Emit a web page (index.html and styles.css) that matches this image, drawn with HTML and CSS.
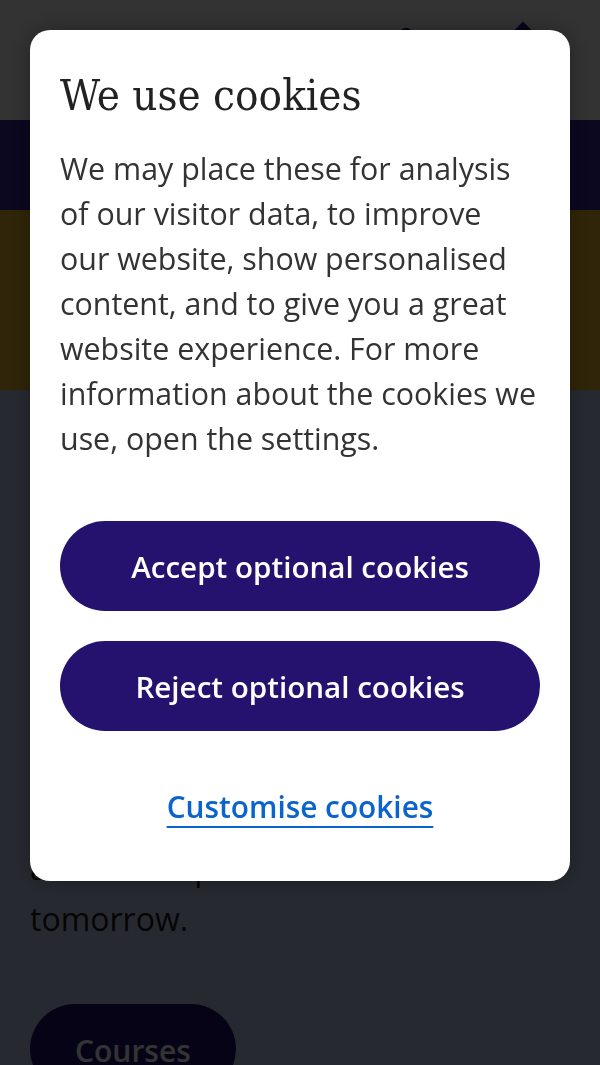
FILE: index.html
```html
<!DOCTYPE html>
<html lang="en">
<head>
  <meta charset="UTF-8">
  <title>Learn with us</title>
  <link rel="stylesheet" href="styles.css">
</head>
<body>

<div class="page">
  <header class="site-header">
    <div class="logo">LOGO</div>
    <div class="header-icons">
      <svg class="icon" viewBox="0 0 24 24" width="34" height="34">
        <circle cx="12" cy="7" r="5" fill="#25126e"/>
        <path d="M3 22c0-5 4-8 9-8s9 3 9 8z" fill="#25126e"/>
      </svg>
      <svg class="icon" viewBox="0 0 24 24" width="36" height="36">
        <path d="M12 1 1 12h3v10h6v-6h4v6h6V12h3z" fill="#25126e"/>
      </svg>
    </div>
  </header>
  <nav class="nav-band"></nav>
  <section class="hero-band"></section>
  <section class="content">
    <h1 class="content-title">Adult learning</h1>
    <p class="content-text">Whatever your age or background, our friendly tutors and flexible courses help you learn something new, gain a qualification, build confidence, meet new people<br>and develop the skills for<br>tomorrow.</p>
    <a class="courses-btn" href="#">Courses</a>
  </section>
</div>

<div class="overlay">
  <div class="cookie-modal">
    <h2 class="cookie-title">We use cookies</h2>
    <p class="cookie-text">We may place these for analysis of our visitor data, to improve our website, show personalised content, and to give you a great website experience. For more information about the cookies we use, open the settings.</p>
    <div class="cookie-actions">
      <button class="cookie-btn">Accept optional cookies</button>
      <button class="cookie-btn">Reject optional cookies</button>
      <a class="cookie-link" href="#">Customise cookies</a>
    </div>
  </div>
</div>

</body>
</html>
```

FILE: styles.css
```css
body {
  margin: 0;
  font-family: 'Open Sans', 'Noto Sans', sans-serif;
  color: #1a1a1a;
  overflow: hidden;
}

.site-header {
  height: 120px;
  background: #fff;
  display: flex;
  justify-content: space-between;
  align-items: flex-start;
  padding: 20px 30px 0;
  box-sizing: border-box;
}

.logo {
  font-weight: bold;
  color: #25126e;
  padding-top: 30px;
}

.header-icons {
  display: flex;
  gap: 82px;
  align-items: flex-start;
  padding-right: 29px;
}

.icon:first-child {
  margin-top: 5px;
}

.nav-band {
  height: 90px;
  background: #37289f;
}

.hero-band {
  height: 180px;
  background: #f0b928;
}

.content {
  background: #bfd1f0;
  padding: 127px 30px 60px;
  height: 700px;
}

.content-title {
  font-size: 40px;
  line-height: 50px;
  margin: 0 0 20px;
}

.content-text {
  font-size: 32px;
  line-height: 51px;
  margin: 0 0 60px;
}

.courses-btn {
  display: inline-block;
  background: #25126e;
  color: #fff;
  font-size: 30px;
  font-weight: 600;
  text-decoration: none;
  padding: 26px 45px 23px;
  border-radius: 50px;
}

.overlay {
  position: fixed;
  top: 0;
  left: 0;
  right: 0;
  bottom: 0;
  background: rgba(0, 0, 0, 0.8);
  padding: 30px;
}

.cookie-modal {
  background: #fff;
  border-radius: 20px;
  padding: 30px 30px 52px;
  box-shadow: 0 0 24px rgba(0, 0, 0, 0.35);
}

.cookie-title {
  font-family: 'DejaVu Serif Condensed', 'DejaVu Serif', serif;
  font-weight: normal;
  font-size: 43.5px;
  line-height: 70px;
  color: #222;
  margin: 0 0 16px;
}

.cookie-text {
  font-size: 30.4px;
  line-height: 45px;
  color: #333;
  margin: 0 3px 60px 0;
}

.cookie-actions {
  display: flex;
  flex-direction: column;
  align-items: center;
  gap: 30px;
}

.cookie-btn {
  width: 100%;
  height: 90px;
  border: none;
  border-radius: 45px;
  background: #25126e;
  color: #fff;
  font-family: 'Open Sans', sans-serif;
  font-size: 29.6px;
  font-weight: 600;
}

.cookie-link {
  margin-top: 23px;
  font-size: 29.8px;
  font-weight: 600;
  line-height: 45px;
  color: #0b63ce;
  text-decoration-thickness: 2px;
  text-underline-offset: 8px;
}
```
